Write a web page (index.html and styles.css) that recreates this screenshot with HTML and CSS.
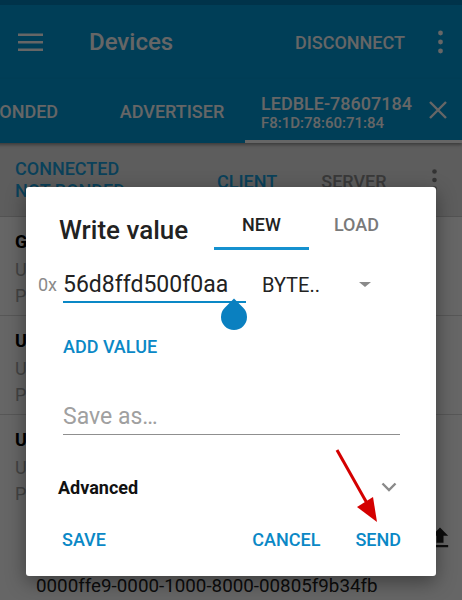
FILE: index.html
```html
<!DOCTYPE html>
<html lang="en">
<head>
<meta charset="utf-8">
<title>Devices - Write value</title>
<link rel="stylesheet" href="styles.css">
</head>
<body>
<div class="app">
  <div class="statusbar"></div>
  <header class="toolbar">
    <svg class="menu-icon" width="25" height="18" viewBox="0 0 25 18"><rect x="0" y="0.5" width="25" height="2.5"/><rect x="0" y="8" width="25" height="2.5"/><rect x="0" y="15.5" width="25" height="2.5"/></svg>
    <span class="toolbar-title">Devices</span>
    <span class="toolbar-action">DISCONNECT</span>
    <svg class="overflow-icon" width="5" height="24" viewBox="0 0 5 24"><circle cx="2.5" cy="3" r="2.4"/><circle cx="2.5" cy="12" r="2.4"/><circle cx="2.5" cy="21" r="2.4"/></svg>
  </header>
  <nav class="tabs">
    <div class="tab tab-first">BONDED</div>
    <div class="tab">ADVERTISER</div>
    <div class="tab tab-device">
      <div class="device-text">
        <div class="device-name">LEDBLE-78607184</div>
        <div class="device-mac">F8:1D:78:60:71:84</div>
      </div>
      <svg class="close-icon" width="18" height="18" viewBox="0 0 18 18"><path d="M1 1L17 17M17 1L1 17"/></svg>
    </div>
  </nav>
  <div class="conn-bar">
    <div class="conn-state">CONNECTED<br>NOT BONDED</div>
    <span class="sub-tab sub-tab-active">CLIENT</span>
    <span class="sub-tab">SERVER</span>
    <svg class="sub-overflow" width="5" height="22" viewBox="0 0 5 22"><circle cx="2.5" cy="2.5" r="2.3"/><circle cx="2.5" cy="11" r="2.3"/><circle cx="2.5" cy="19.5" r="2.3"/></svg>
  </div>
  <div class="list">
    <div class="item">
      <div class="item-title">Generic Access</div>
      <div class="item-line">UUID: 0x1800</div>
      <div class="item-line">PRIMARY SERVICE</div>
    </div>
    <div class="item">
      <div class="item-title">Unknown Service</div>
      <div class="item-line">UUID: 0000ffd0-0000-1000-8000</div>
      <div class="item-line">PRIMARY SERVICE</div>
    </div>
    <div class="item item-open">
      <div class="item-title">Unknown Service</div>
      <div class="item-line">UUID: 0000ffe5-0000-1000-8000</div>
      <div class="item-line">PRIMARY SERVICE</div>
      <div class="characteristic">
        <div class="char-row">
          <span class="char-name">Unknown Characteristic</span>
          <svg class="upload-icon" width="28" height="28" viewBox="0 0 24 24"><path d="M9 16h6v-6h4l-7-7-7 7h4zm-4 2h14v2H5z"/></svg>
        </div>
        <div class="char-line">UUID:</div>
        <div class="char-line char-uuid">0000ffe9-0000-1000-8000-00805f9b34fb</div>
      </div>
    </div>
  </div>
</div>

<div class="scrim"></div>

<div class="dialog">
  <div class="dlg-head">
    <div class="dlg-title">Write value</div>
    <div class="dlg-tabs">
      <div class="dlg-tab dlg-tab-active">NEW</div>
      <div class="dlg-tab">LOAD</div>
    </div>
  </div>
  <div class="value-row">
    <span class="prefix">0x</span>
    <div class="value-input">56d8ffd500f0aa<span class="handle"></span></div>
    <div class="spinner"><span class="spinner-text">BYTE..</span><span class="spinner-arrow"></span></div>
  </div>
  <div class="add-value">ADD VALUE</div>
  <div class="save-as">Save as…</div>
  <div class="advanced">
    <span class="advanced-label">Advanced</span>
    <svg class="chevron" width="16" height="10" viewBox="0 0 16 10"><path d="M1.5 1.5L8 8L14.5 1.5"/></svg>
  </div>
  <div class="actions">
    <span class="btn">SAVE</span>
    <span class="btn btn-cancel">CANCEL</span>
    <span class="btn btn-send">SEND</span>
  </div>
</div>

<svg class="pointer-arrow" width="60" height="85" viewBox="0 0 60 85"><line x1="7" y1="5" x2="38" y2="60"/><polygon points="47,77 27,62 43,52"/></svg>
</body>
</html>
```

FILE: styles.css
```css
* { box-sizing: border-box; }

html, body {
  margin: 0;
  padding: 0;
  width: 462px;
  height: 600px;
  overflow: hidden;
  font-family: Roboto, "Noto Sans", sans-serif;
}

.app {
  position: relative;
  height: 600px;
  overflow: hidden;
  background: #ffffff;
}

.statusbar {
  height: 5px;
  background: #007fb9;
}

.toolbar {
  height: 74px;
  background: #009bd9;
  display: flex;
  align-items: center;
  padding-left: 18px;
  color: #ffffff;
}

.menu-icon { fill: #ffffff; }

.toolbar-title {
  margin-left: 46px;
  font-size: 24px;
  font-weight: 500;
}

.toolbar-action {
  margin-left: auto;
  font-size: 18px;
  font-weight: 500;
}

.overflow-icon {
  fill: #ffffff;
  margin-left: 33px;
  margin-right: 19px;
}

.tabs {
  height: 64px;
  background: #009bd9;
  display: flex;
  margin-left: -53px;
  box-shadow: 0 2px 3px rgba(0, 0, 0, 0.35);
  position: relative;
}

.tab {
  width: 146px;
  display: flex;
  align-items: center;
  justify-content: center;
  color: #ffffff;
  font-size: 18px;
  font-weight: 500;
}

.tab-first { width: 152px; }

.tab-device {
  flex: 1;
  justify-content: flex-start;
  padding: 6px 15px 0 16px;
  border-bottom: 3px solid #ffffff;
}

.device-name {
  font-size: 18px;
  font-weight: 500;
  line-height: 20px;
}

.device-mac {
  font-size: 15px;
  line-height: 18px;
}

.close-icon {
  margin-left: auto;
  stroke: #ffffff;
  stroke-width: 2.4;
  fill: none;
  margin-top: -5px;
}

.conn-bar {
  height: 74px;
  background: #e8e8e8;
  display: flex;
  align-items: center;
  padding-left: 15px;
  border-bottom: 1px solid #d0d0d0;
}

.conn-state {
  width: 202px;
  font-size: 18px;
  font-weight: 500;
  line-height: 22px;
  color: #1aa3e0;
}

.sub-tab {
  font-size: 18px;
  font-weight: 500;
  color: #8f8f8f;
  margin-top: 4px;
}

.sub-tab-active {
  color: #1aa3e0;
  margin-right: 44px;
}

.sub-overflow {
  fill: #808080;
  margin-left: 45px;
}

.item {
  height: 99px;
  padding: 12px 15px 0;
  border-bottom: 1px solid #d9d9d9;
  font-size: 18px;
  line-height: 26px;
}

.item-title {
  font-weight: 700;
  color: #000000;
  margin-bottom: 2px;
  white-space: nowrap;
}

.item-line {
  color: #a8a8a8;
  white-space: nowrap;
}

.item-open {
  height: auto;
  border-bottom: none;
}

.characteristic {
  margin-top: 14px;
  padding-left: 21px;
}

.char-row {
  display: flex;
  align-items: center;
  height: 30px;
}

.char-name {
  font-weight: 500;
  color: #222222;
}

.upload-icon {
  margin-left: auto;
  margin-right: -7px;
  margin-top: 4px;
  fill: #222222;
}

.char-line {
  color: #222222;
  font-size: 18.8px;
  line-height: 23px;
  white-space: nowrap;
}

.char-uuid {
  margin-top: 1px;
}

.scrim {
  position: absolute;
  inset: 0;
  background: rgba(0, 0, 0, 0.6);
}

.dialog {
  position: absolute;
  left: 26px;
  top: 187px;
  width: 410px;
  height: 389px;
  background: #ffffff;
  border-radius: 3px;
  box-shadow: 0 6px 20px rgba(0, 0, 0, 0.4);
  color: #222222;
}

.dlg-head {
  display: flex;
  height: 63px;
  padding-left: 33px;
}

.dlg-title {
  font-size: 26px;
  font-weight: 500;
  line-height: 26px;
  padding-top: 30px;
  color: #222222;
}

.dlg-tabs {
  display: flex;
  margin-left: auto;
  padding-right: 32px;
}

.dlg-tab {
  width: 95px;
  height: 63px;
  padding-top: 28px;
  text-align: center;
  font-size: 18px;
  font-weight: 500;
  line-height: 20px;
  color: #7a7a7a;
}

.dlg-tab-active {
  color: #222222;
  border-bottom: 3px solid #1591cf;
}

.value-row {
  display: flex;
  align-items: flex-start;
  margin-top: 18px;
  padding-left: 12px;
  height: 35px;
}

.prefix {
  width: 25px;
  font-size: 18px;
  line-height: 33px;
  color: #8a8a8a;
}

.value-input {
  position: relative;
  width: 183px;
  font-size: 23px;
  line-height: 33px;
  color: #222222;
  border-bottom: 2px solid #0a88c6;
}

.handle {
  position: absolute;
  left: 158px;
  top: 36px;
  width: 26px;
  height: 26px;
  background: #0a80c0;
  border-radius: 0 50% 50% 50%;
  transform: rotate(45deg);
}

.spinner {
  margin-left: 16px;
  width: 118px;
  height: 33px;
  display: flex;
  align-items: center;
  justify-content: space-between;
  padding-right: 9px;
}

.spinner-text {
  font-size: 20px;
  color: #222222;
}

.spinner-arrow {
  width: 0;
  height: 0;
  border-left: 6.5px solid transparent;
  border-right: 6.5px solid transparent;
  border-top: 5.5px solid #8a8a8a;
}

.add-value {
  margin-top: 34px;
  padding-left: 37px;
  font-size: 18px;
  font-weight: 500;
  line-height: 20px;
  color: #0a88c6;
}

.save-as {
  margin: 46px 36px 0 37px;
  padding-bottom: 3px;
  font-size: 23px;
  line-height: 28px;
  color: #a0a0a0;
  border-bottom: 1.5px solid #8f8f8f;
}

.advanced {
  display: flex;
  align-items: center;
  justify-content: space-between;
  height: 24px;
  margin-top: 40px;
  padding: 0 39px 0 32px;
}

.advanced-label {
  font-size: 18px;
  font-weight: 700;
  color: #111111;
}

.chevron {
  fill: none;
  stroke: #8a8a8a;
  stroke-width: 2.4;
}

.actions {
  display: flex;
  margin-top: 31px;
  padding: 0 35px 0 36px;
}

.btn {
  font-size: 18px;
  font-weight: 500;
  line-height: 20px;
  color: #0a88c6;
}

.btn-cancel { margin-left: auto; }

.btn-send { margin-left: 35px; }

.pointer-arrow {
  position: absolute;
  left: 330px;
  top: 445px;
}

.pointer-arrow line {
  stroke: #d40000;
  stroke-width: 3;
}

.pointer-arrow polygon {
  fill: #d40000;
}
```
